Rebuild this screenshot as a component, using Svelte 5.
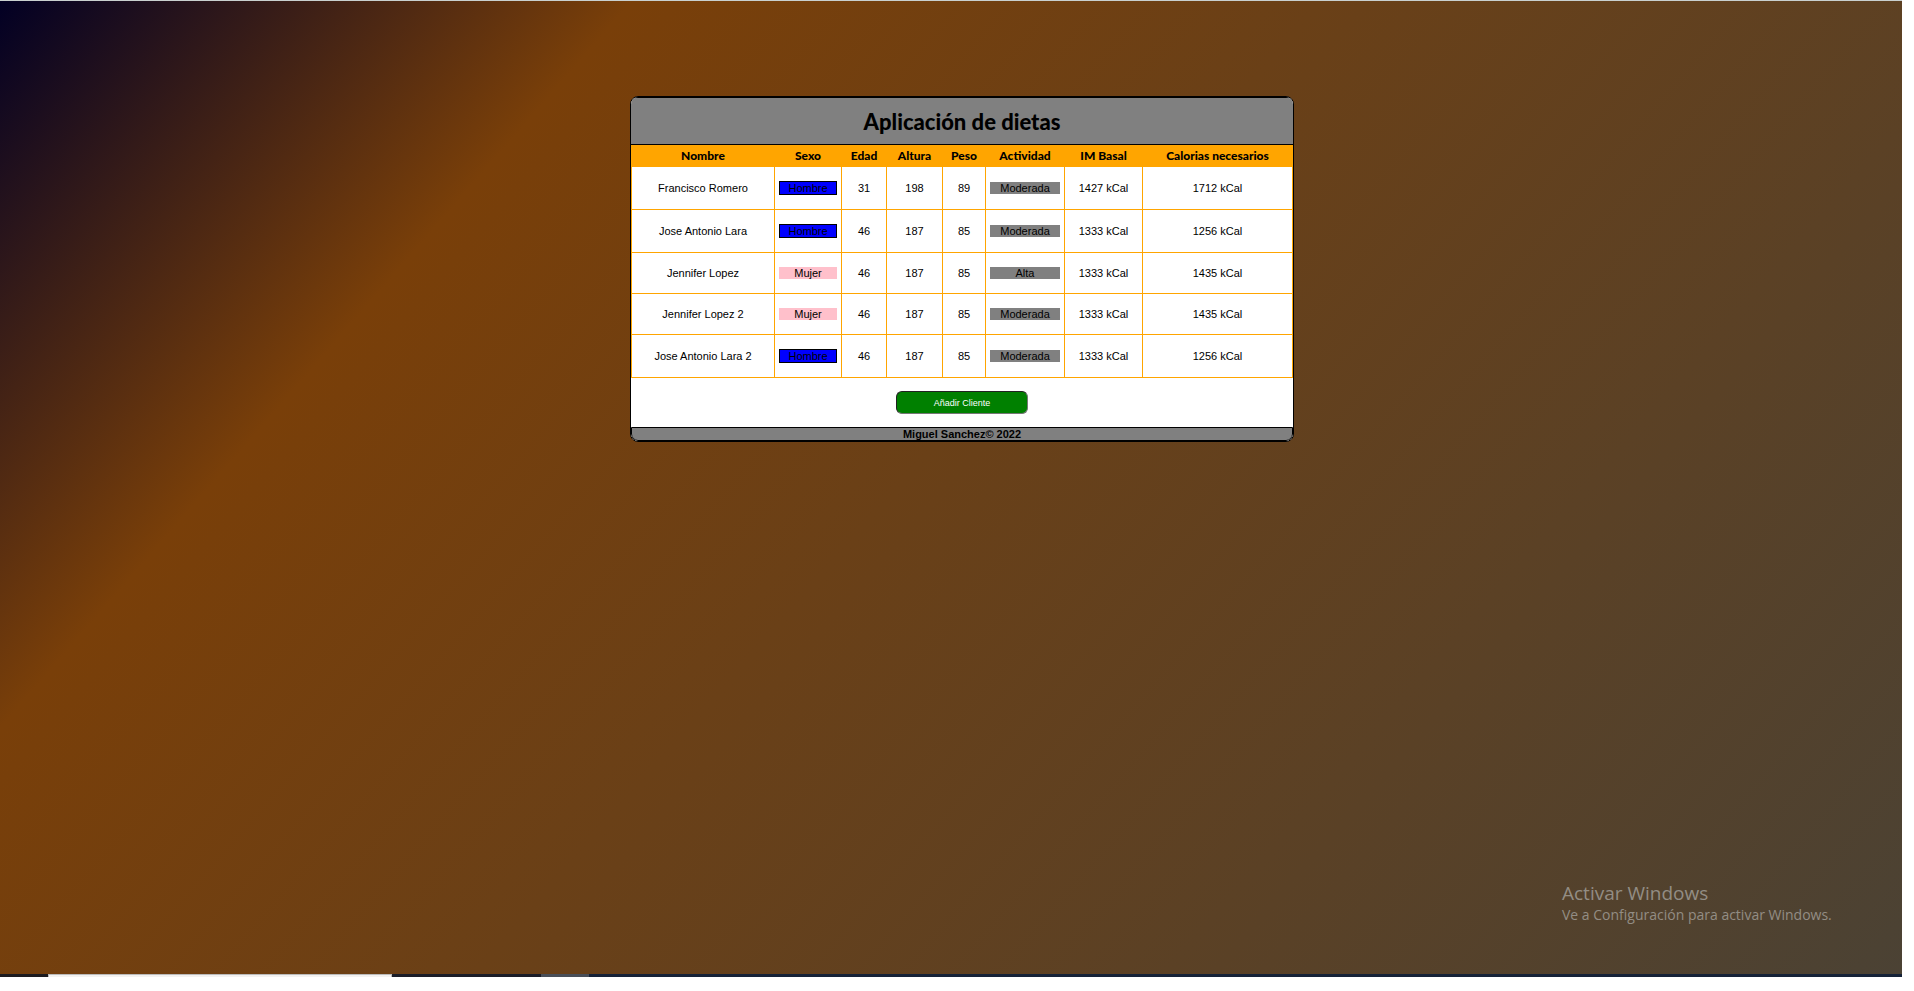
<script>
  const columns = ['Nombre', 'Sexo', 'Edad', 'Altura', 'Peso', 'Actividad', 'IM Basal', 'Calorias necesarios'];
  const clients = [
    { name: 'Francisco Romero', sex: 'Hombre', age: 31, height: 198, weight: 89, activity: 'Moderada', basal: 1427, calories: 1712 },
    { name: 'Jose Antonio Lara', sex: 'Hombre', age: 46, height: 187, weight: 85, activity: 'Moderada', basal: 1333, calories: 1256 },
    { name: 'Jennifer Lopez', sex: 'Mujer', age: 46, height: 187, weight: 85, activity: 'Alta', basal: 1333, calories: 1435 },
    { name: 'Jennifer Lopez 2', sex: 'Mujer', age: 46, height: 187, weight: 85, activity: 'Moderada', basal: 1333, calories: 1435 },
    { name: 'Jose Antonio Lara 2', sex: 'Hombre', age: 46, height: 187, weight: 85, activity: 'Moderada', basal: 1333, calories: 1256 }
  ];
</script>

<div class="screen">
  <main>
    <section class="card">
      <header><h1>Aplicación de dietas</h1></header>
      <table>
        <colgroup>
          <col class="c-name" /><col class="c-sex" /><col class="c-age" /><col class="c-height" />
          <col class="c-weight" /><col class="c-activity" /><col class="c-basal" /><col />
        </colgroup>
        <thead>
          <tr>
            {#each columns as column}<th scope="col">{column}</th>{/each}
          </tr>
        </thead>
        <tbody>
          {#each clients as client}
            <tr>
              <td>{client.name}</td>
              <td><p class="tag" class:male={client.sex === 'Hombre'} class:female={client.sex === 'Mujer'}>{client.sex}</p></td>
              <td>{client.age}</td>
              <td>{client.height}</td>
              <td>{client.weight}</td>
              <td><p class="tag activity">{client.activity}</p></td>
              <td>{client.basal} kCal</td>
              <td>{client.calories} kCal</td>
            </tr>
          {/each}
        </tbody>
      </table>
      <div class="actions"><button type="button">Añadir Cliente</button></div>
      <footer>Miguel Sanchez© 2022</footer>
    </section>
    <aside>
      <strong>Activar Windows</strong>
      <span>Ve a Configuración para activar Windows.</span>
    </aside>
  </main>
  <div class="taskbar"><i class="start"></i><i class="search"></i><i class="apps"></i><i class="active"></i></div>
</div>

<style>
  :global(body) {
    margin: 0;
    background: #fff;
  }
  .screen {
    box-sizing: border-box;
    display: flex;
    flex-direction: column;
    min-height: 100vh;
    padding: 0 12px 14px 0;
    font: 11px/12px "Liberation Sans", Arial, sans-serif;
    color: #000;
  }
  main {
    position: relative;
    flex: 1;
    padding: 95px 0 0 22px;
    border-top: 1px solid #c9d0cf;
    background: linear-gradient(131deg, #020024 0%, #793f09 23%, #4b4234 100%);
  }
  .card {
    box-sizing: border-box;
    width: 100%;
    max-width: 664px;
    margin: 0 auto;
    overflow: hidden;
    border: 1px solid #000;
    border-radius: 8px;
    background: #fff;
    text-align: center;
  }
  header {
    border: solid #000;
    border-width: 1px 0;
    background: gray;
  }
  h1 {
    margin: 0;
    padding: 12px 0 10px;
    font: 900 22px/24px Lato, sans-serif;
  }
  table {
    width: 100%;
    table-layout: fixed;
    border-collapse: collapse;
  }
  .c-name { width: 143px; }
  .c-sex { width: 67px; }
  .c-age { width: 45px; }
  .c-height { width: 56px; }
  .c-weight { width: 43px; }
  .c-activity { width: 79px; }
  .c-basal { width: 78px; }
  th {
    padding: 3px 0;
    border: 1px solid orange;
    background: orange;
    font: 900 12px/14px Lato, sans-serif;
  }
  td {
    padding: 14px 4px;
    border: 1px solid orange;
  }
  .tag {
    margin: 0;
  }
  .male {
    border: 1px solid #000;
    background: blue;
  }
  .female {
    background: pink;
  }
  .activity {
    background: gray;
  }
  .actions {
    display: flex;
    justify-content: center;
    padding: 13px 0;
  }
  button {
    width: 132px;
    height: 23px;
    padding: 0;
    border: 1px solid;
    border-color: #222 #767676 #767676 #222;
    border-radius: 6px;
    background: green;
    color: #fff;
    font: 9px/12px "Liberation Sans", Arial, sans-serif;
  }
  footer {
    border: 1px solid #000;
    border-radius: 0 0 7px 7px;
    background: gray;
    font-weight: bold;
  }
  aside {
    position: absolute;
    right: 65px;
    bottom: 49px;
    display: flex;
    flex-direction: column;
    min-width: 275px;
    color: #938d84;
    font-family: "Open Sans", sans-serif;
  }
  strong {
    font-size: 19px;
    line-height: 24px;
    font-weight: 400;
  }
  span {
    font-size: 14px;
    line-height: 20px;
  }
  .taskbar {
    display: flex;
    height: 3px;
    background: #152238;
  }
  .start { width: 48px; background: #1c1b20; }
  .search { box-sizing: border-box; width: 344px; border: 1px solid #bbb; border-bottom: 0; background: #f3f2f1; }
  .apps { width: 149px; background: #1a1d28; }
  .active { width: 48px; background: #484e58; }
</style>
